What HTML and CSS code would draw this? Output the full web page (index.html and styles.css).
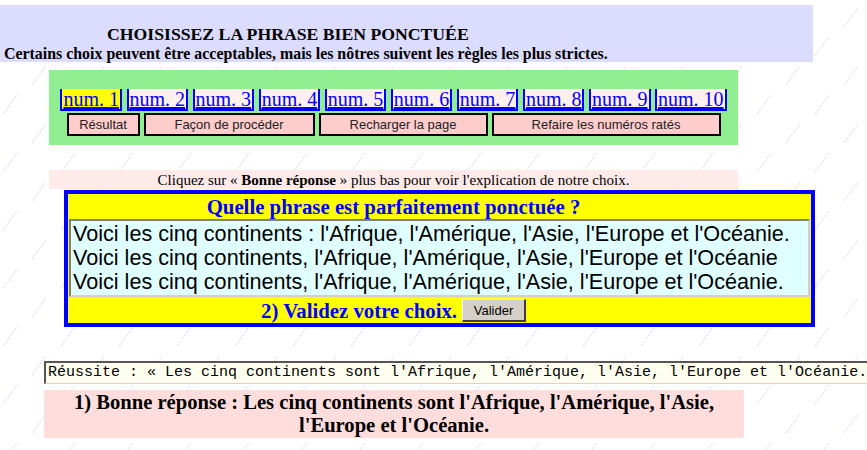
FILE: index.html
```html
<!DOCTYPE html>
<html lang="fr">
<head>
<meta charset="utf-8">
<title>Choisissez la phrase bien ponctuée</title>
<link rel="stylesheet" href="styles.css">
</head>
<body>
<div class="header">
  <div class="title">CHOISISSEZ LA PHRASE BIEN PONCTUÉE</div>
  <div class="subtitle">Certains choix peuvent être acceptables, mais les nôtres suivent les règles les plus strictes.</div>
</div>

<div class="nav">
  <div class="nums">
    <a class="num current" href="#">num. 1</a>
    <a class="num" href="#">num. 2</a>
    <a class="num" href="#">num. 3</a>
    <a class="num" href="#">num. 4</a>
    <a class="num" href="#">num. 5</a>
    <a class="num" href="#">num. 6</a>
    <a class="num" href="#">num. 7</a>
    <a class="num" href="#">num. 8</a>
    <a class="num" href="#">num. 9</a>
    <a class="num" href="#">num. 10</a>
  </div>
  <div class="actions">
    <button class="act w1">Résultat</button>
    <button class="act w2">Façon de procéder</button>
    <button class="act w3">Recharger la page</button>
    <button class="act w4">Refaire les numéros ratés</button>
  </div>
</div>

<div class="hint">Cliquez sur « <b>Bonne réponse</b> » plus bas pour voir l'explication de notre choix.</div>

<div class="quiz">
  <div class="qtitle">Quelle phrase est parfaitement ponctuée ?</div>
  <div class="listbox">
    <div class="opt">Voici les cinq continents : l'Afrique, l'Amérique, l'Asie, l'Europe et l'Océanie.</div>
    <div class="opt">Voici les cinq continents, l'Afrique, l'Amérique, l'Asie, l'Europe et l'Océanie</div>
    <div class="opt">Voici les cinq continents, l'Afrique, l'Amérique, l'Asie, l'Europe et l'Océanie.</div>
  </div>
  <div class="validate">
    <span class="vlabel">2) Validez votre choix.</span>
    <button class="vbtn">Valider</button>
  </div>
</div>

<div class="result">Réussite : « Les cinq continents sont l'Afrique, l'Amérique, l'Asie, l'Europe et l'Océanie.</div>

<div class="answer">1) Bonne réponse : Les cinq continents sont l'Afrique, l'Amérique, l'Asie, l'Europe et l'Océanie.</div>
</body>
</html>
```

FILE: styles.css
```css
html, body {
  margin: 0;
  padding: 0;
}
body {
  overflow: hidden;
  background-color: #ffffff;
  background-image: url("data:image/svg+xml,%3Csvg xmlns='http://www.w3.org/2000/svg' width='58' height='58'%3E%3Cg stroke='%23d8d8f8' stroke-width='1' stroke-dasharray='3 1' fill='none'%3E%3Cpath d='M3 56 L17 37'/%3E%3Cpath d='M32 27 L46 8'/%3E%3C/g%3E%3C/svg%3E");
  font-family: "Liberation Serif", "Times New Roman", serif;
  color: #000;
}

.header {
  margin-top: 5px;
  width: 813px;
  height: 57px;
  background: #dcdcfe;
  box-sizing: border-box;
  padding-top: 19px;
}
.title {
  font-weight: bold;
  font-size: 17.7px;
  line-height: 20px;
  padding-left: 107px;
}
.subtitle {
  font-weight: bold;
  font-size: 15.9px;
  line-height: 19px;
  padding-left: 4px;
}

.nav {
  margin: 8px 0 0 49px;
  width: 689px;
  height: 75px;
  box-sizing: border-box;
  background: #90ee90;
  padding-top: 19px;
}
.nums {
  display: flex;
  justify-content: center;
  gap: 4.5px;
}
.num {
  display: block;
  height: 20px;
  line-height: 20px;
  font-size: 20px;
  padding: 0 1px;
  color: #0000ff;
  text-decoration: underline;
  background: #fff0f0;
  border-left: 2px solid #0000ff;
  border-right: 2px solid #0000ff;
  border-bottom: 2px solid #0000ff;
  white-space: nowrap;
}
.num.current {
  background: #ffff00;
}
.actions {
  display: flex;
  justify-content: center;
  gap: 4px;
  margin-top: 2px;
}
.act {
  height: 23px;
  box-sizing: border-box;
  border: 2px solid #000;
  background: #ffcccc;
  font-family: "Liberation Sans", Arial, sans-serif;
  font-size: 13px;
  color: #222;
  padding: 0;
  line-height: 19px;
}
.w1 { width: 73px; }
.w2 { width: 171px; }
.w3 { width: 169px; }
.w4 { width: 229px; }

.hint {
  margin: 25px 0 0 49px;
  width: 689px;
  height: 19px;
  line-height: 20px;
  background: #ffeaea;
  text-align: center;
  font-size: 15px;
}

.quiz {
  margin: 1px 0 0 64px;
  width: 751px;
  height: 137px;
  box-sizing: border-box;
  border: 4px solid #0000ff;
  background: #ffff00;
}
.qtitle {
  height: 25px;
  line-height: 26px;
  text-align: center;
  padding-right: 92px;
  font-weight: bold;
  font-size: 20.8px;
  color: #0000ff;
}
.listbox {
  margin: 0 1px;
  height: 78px;
  box-sizing: border-box;
  border-top: 2px solid #808080;
  border-left: 2px solid #808080;
  border-right: 2px solid #d4d0c8;
  border-bottom: 2px solid #d4d0c8;
  background: #e0ffff;
  padding: 1px 2px;
  font-family: "Liberation Sans", Arial, sans-serif;
  font-size: 21.6px;
  overflow: hidden;
}
.opt {
  height: 24px;
  line-height: 24px;
  white-space: nowrap;
}
.validate {
  height: 26px;
  display: flex;
  align-items: center;
  justify-content: center;
  gap: 5px;
  padding-right: 92px;
}
.vlabel {
  font-weight: bold;
  font-size: 20.8px;
  color: #0000ff;
  line-height: 24px;
  padding-top: 2px;
}
.vbtn {
  width: 64px;
  height: 23px;
  box-sizing: border-box;
  background: #d4d0c8;
  border-top: 1px solid #ffffff;
  border-left: 1px solid #ffffff;
  border-right: 2px solid #404040;
  border-bottom: 2px solid #404040;
  font-family: "Liberation Sans", Arial, sans-serif;
  font-size: 13px;
  color: #000;
  padding: 0;
  margin-top: 1px;
}

.result {
  margin: 34px 0 0 44px;
  width: 840px;
  height: 23px;
  box-sizing: border-box;
  background: #fffff0;
  border-top: 2px solid #555;
  border-left: 2px solid #555;
  border-bottom: 1px solid #f0c8c8;
  padding-left: 2px;
  font-family: "Liberation Mono", "Courier New", monospace;
  font-size: 15px;
  line-height: 20px;
  white-space: nowrap;
  overflow: hidden;
}

.answer {
  margin: 6px 0 0 44px;
  width: 700px;
  height: 48px;
  box-sizing: border-box;
  background: #ffdddd;
  text-align: center;
  font-weight: bold;
  font-size: 20.6px;
  line-height: 23px;
  padding: 1px 20px 0;
}
```
